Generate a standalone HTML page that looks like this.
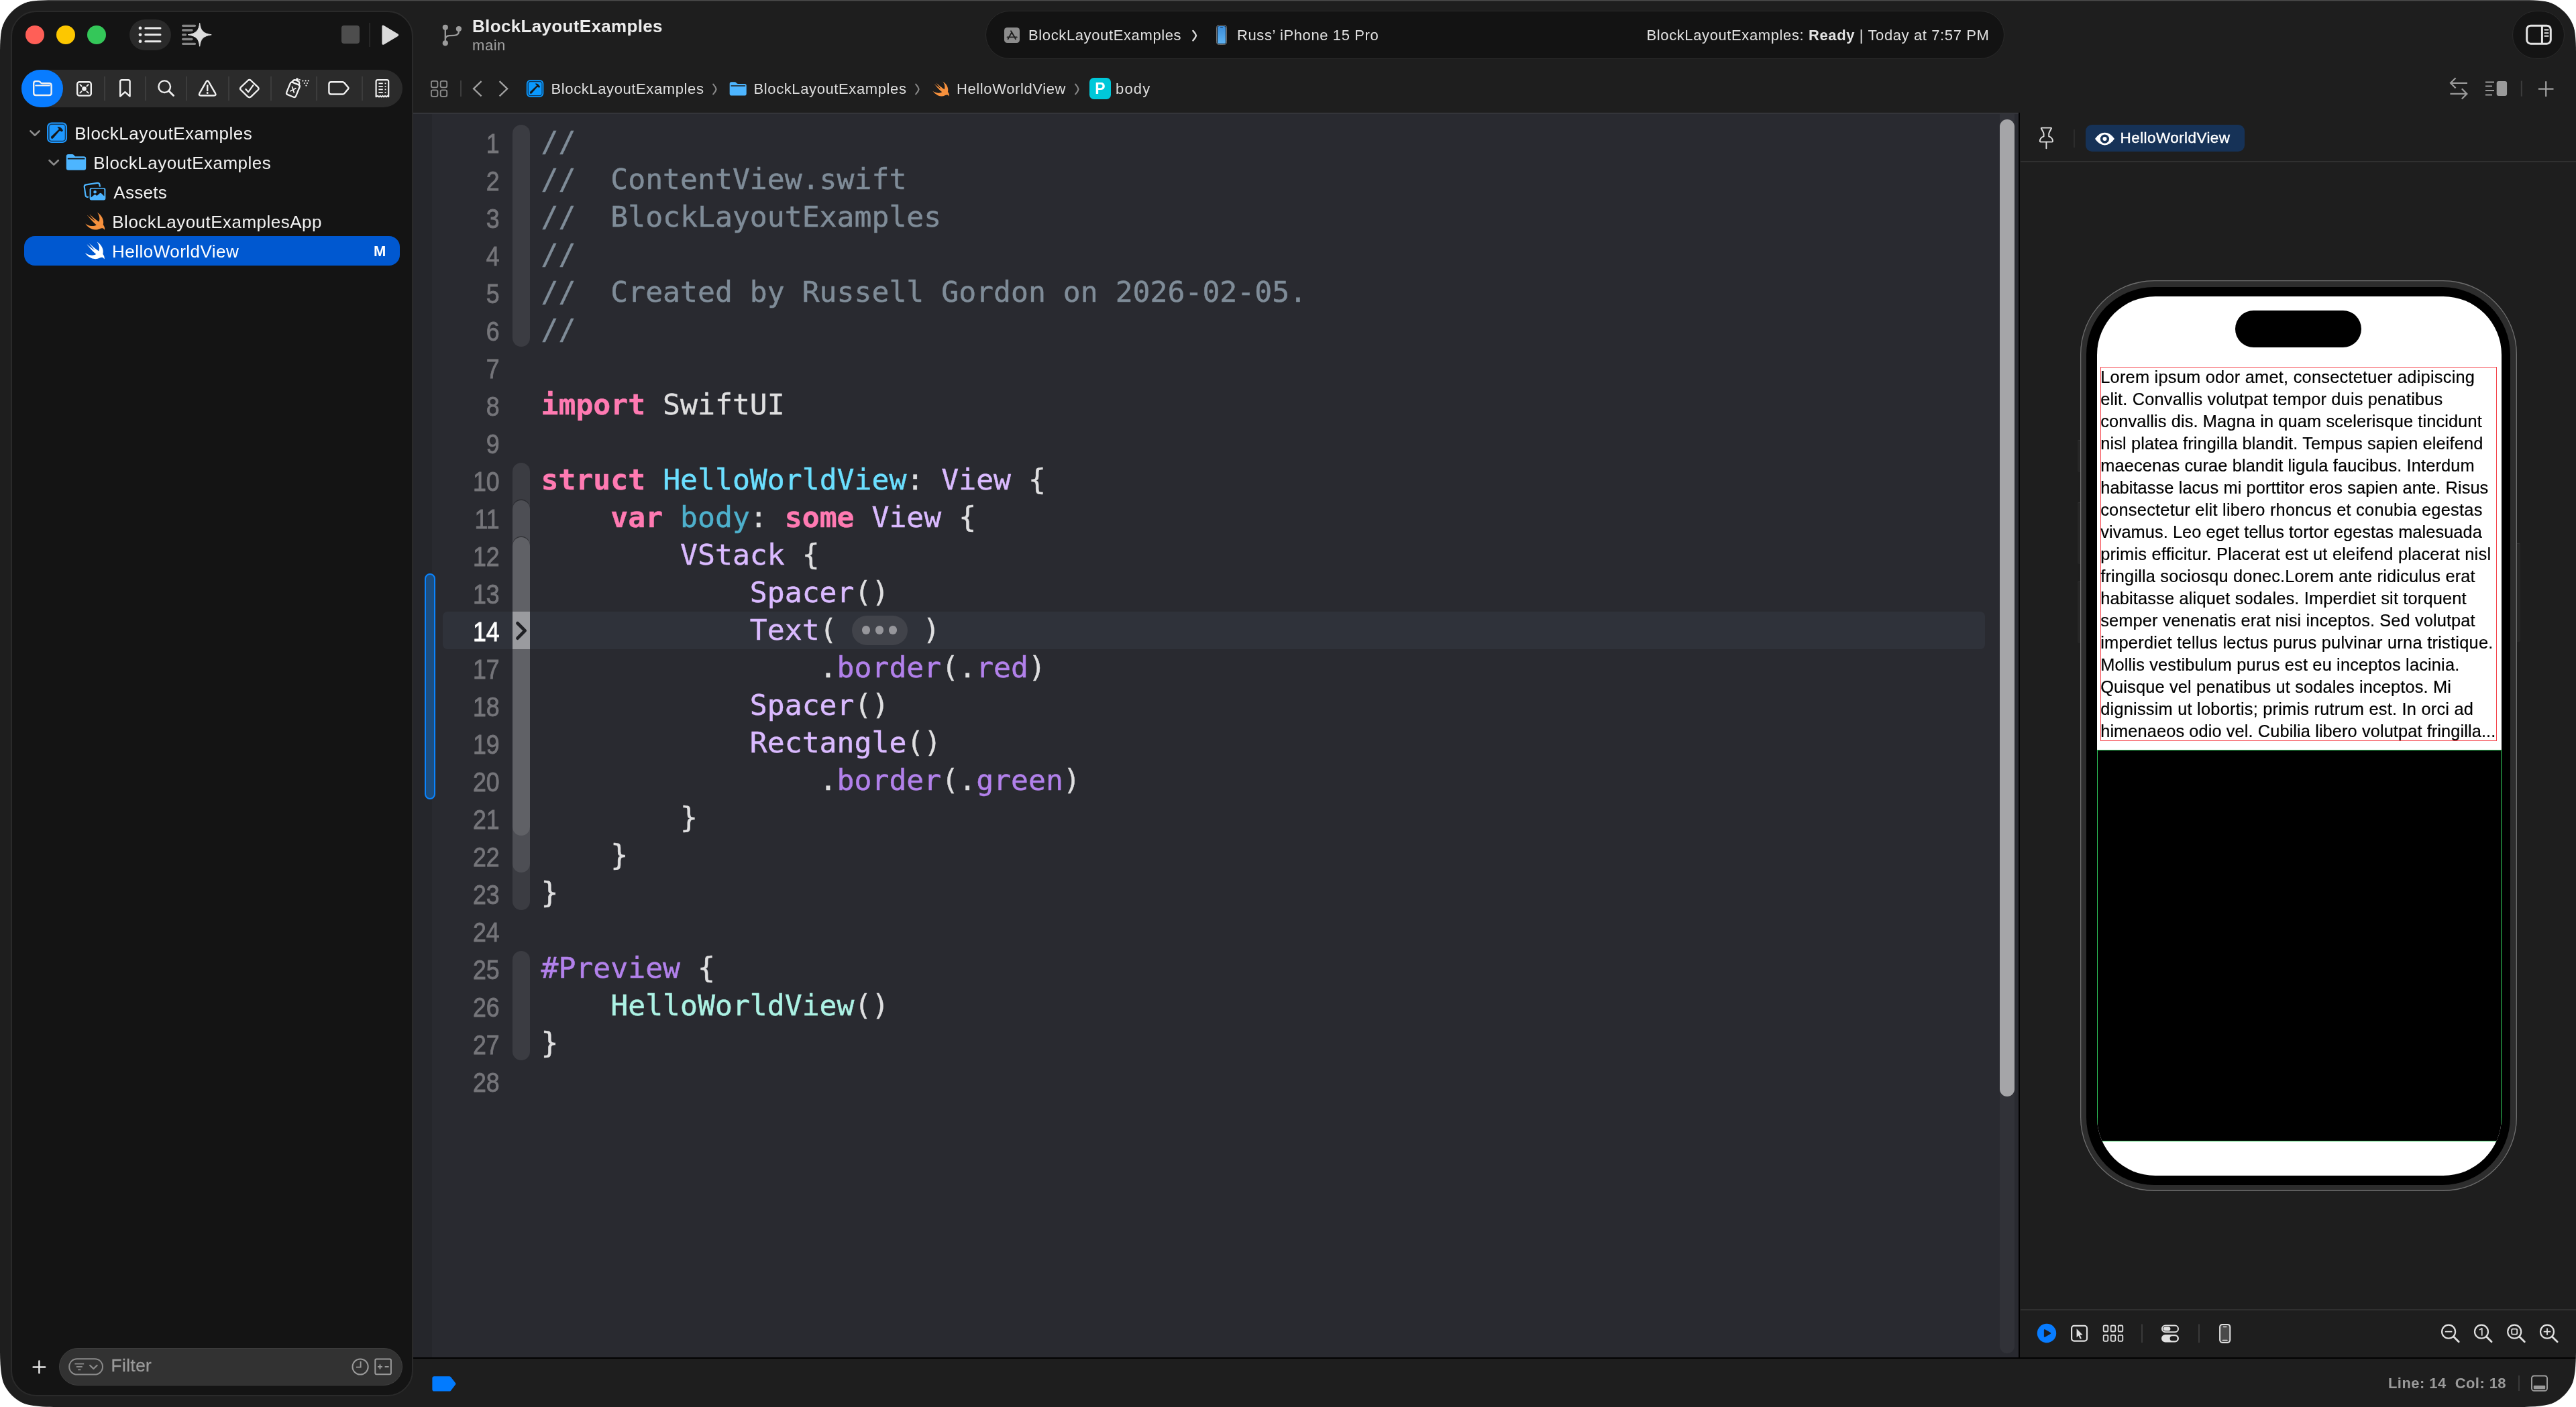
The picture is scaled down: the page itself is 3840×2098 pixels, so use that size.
<!DOCTYPE html>
<html lang="en">
<head>
<meta charset="utf-8">
<title>BlockLayoutExamples — HelloWorldView.swift</title>
<style>
*{box-sizing:border-box;margin:0;padding:0}
html,body{width:3840px;height:2098px;overflow:hidden;background:#fff}
body{font-family:"Liberation Sans",sans-serif;color:#e6e6e6;position:relative}
.abs,#win *{position:absolute}
#win{position:absolute;will-change:transform;left:0;top:0;width:3840px;height:2098px;background:#1e1e1e;border-radius:60px;overflow:hidden;clip-path:path('M0,78 C0,15 15,0 78,0 L3762,0 C3825,0 3840,15 3840,78 L3840,2012 C3840,2084 3826,2098 3754,2098 L86,2098 C14,2098 0,2084 0,2012 Z')}
#win span{white-space:pre}
#topline{left:0;top:0;width:3840px;height:2px;background:linear-gradient(#4d4d4d 0 50%,#2e2e2e 50% 100%)}
/* sidebar */
#side{left:16px;top:16px;width:600px;height:2066px;background:#141414;border:2px solid #2a2a2a;border-radius:38px}
.tl{width:28px;height:28px;border-radius:50%;top:38px}
.t{line-height:44px;height:44px;font-size:26px;letter-spacing:.48px;color:#f2f2f2}
.nsep{top:114px;width:2px;height:36px;background:#3c3c3c}
.jb{line-height:40px;height:40px;font-size:22px;letter-spacing:.61px;color:#dedede;top:112.5px}
.jchev{top:121.5px}
.sb{top:33px;line-height:40px;height:40px;font-size:22px;letter-spacing:.62px;color:#e2e2e2}
.sb b{position:static!important}
/* editor */
#editor{left:616px;top:168px;width:2393px;height:1856px;background:#292a30;overflow:hidden}
#gut{left:0;top:0;width:28px;height:1856px;background:#25262b}
.ln{left:0;width:128.6px;text-align:right;font-size:41px;line-height:56px;height:56px;color:#75757a;transform:scaleX(.87);transform-origin:100% 50%;-webkit-text-stroke:.85px #75757a;margin-top:2px}
.cl{left:190.5px;font-family:"DejaVu Sans Mono","Liberation Mono",monospace;font-size:43.1px;line-height:56px;height:56px;color:#dfdfe0;-webkit-text-stroke:.45px;margin-top:.6px}
#win .cl span{position:static}
.c{color:#7f8c98}.k{color:#ff7ab2;font-weight:bold}.d{color:#6bdfff}.b{color:#4eb0cc}.v{color:#dabaff}.m{color:#b281eb}.p{color:#acf2e4}
#edtop{left:0;top:0;width:2394px;height:2px;background:#34353a}
#curline{left:44px;width:2299px;height:56px;background:#2f323a;border-radius:7px}
.rib{left:148px;width:26px;border-radius:13px}
.r1{background:#3b3c42}.r2{background:#4d4e54;box-shadow:0 -1.5px 0 #2a2b30}.r3{background:#606166;box-shadow:0 -1.5px 0 #333438}
#ribcur{left:148px;width:26px;height:56px;background:#9a9b9f}
#chg{left:17px;top:687px;width:16px;height:337px;border:2.5px solid #0a84ff;background:#1c4e80;border-radius:8px}
#fold{left:653.6px;width:83.4px;height:44px;border-radius:22px;background:#41434a}
#fold i{top:15.8px;width:12.4px;height:12.4px;border-radius:50%;background:#96969b}
#fold i:nth-child(1){left:15.2px}#fold i:nth-child(2){left:35.2px}#fold i:nth-child(3){left:55.2px}
#sbtrack{left:2365px;top:2px;width:22.3px;height:1848px;background:#313238;border-radius:0 0 11px 11px}
#sbthumb{left:2365px;top:10px;width:22.3px;height:1457.2px;background:#a5a5a8;border-radius:11.2px}
/* canvas */
#canvas{left:3010px;top:168px;width:830px;height:1856px;background:#1e1e1e}
.pbtn{background:#262626;border-radius:2px;border-top:1.5px solid #333}
#phone{left:3101px;top:418px;width:650.5px;height:1358px;border-radius:110px;background:#2d2d2d;box-shadow:inset 0 0 0 1.3px #6e6e6e}
#bezel{left:3110.2px;top:427.5px;width:631.8px;height:1339px;border-radius:101px;background:#000}
#screen{left:3125.5px;top:441.5px;width:603px;height:1311.5px;border-radius:87px;background:#fff;overflow:hidden}
.lo{left:3131.2px;height:33px;line-height:33px;font-size:25.4px;color:#000;-webkit-text-stroke:.2px #000}
</style>
</head>
<body>
<div id="win">
<div id="topline"></div>

<!-- ================= SIDEBAR ================= -->
<div id="side"></div>
<div class="tl" style="left:38px;background:#ff5f57"></div>
<div class="tl" style="left:84px;background:#fdc700"></div>
<div class="tl" style="left:130px;background:#34c759"></div>
<!-- toolbar buttons in sidebar -->
<div style="left:193px;top:29px;width:62px;height:46px;border-radius:23px;background:#2a2a2a"></div>
<svg style="left:193px;top:29px" width="62" height="46" viewBox="0 0 62 46"><g fill="#ebebeb"><circle cx="16" cy="12.9" r="2.4"/><circle cx="16" cy="22.8" r="2.4"/><circle cx="16" cy="32.7" r="2.4"/></g><g stroke="#ebebeb" stroke-width="3" stroke-linecap="round"><path d="M23.8 12.9H46M23.8 22.8H46M23.8 32.7H46"/></g></svg>
<svg style="left:268px;top:30px" width="52" height="44" viewBox="0 0 52 44"><g stroke="#858585" stroke-width="3.3" stroke-linecap="round"><path d="M4.6 8.3H22.5M4.6 15H18M4.6 21.8H8.6M4.6 28.5H18M4.6 35.3H22.5"/></g><path d="M29.7 4.4C31 15.5 34.5 19.8 47.2 21.8C34.5 23.8 31 28.1 29.7 39.2C28.4 28.1 24.9 23.8 12.2 21.8C24.9 19.8 28.4 15.5 29.7 4.4Z" fill="#dddddd" stroke="#dddddd" stroke-width="1" stroke-linejoin="round"/></svg>
<div style="left:509px;top:38px;width:27px;height:27px;border-radius:4px;background:#4d4d4d"></div>
<div style="left:550px;top:34px;width:2px;height:36px;background:#262626"></div>
<svg style="left:566px;top:34px" width="32" height="36" viewBox="0 0 32 36"><path d="M4.2 5.6V30.8Q4.2 32.6 5.8 31.7L26.7 19.3Q28 18.2 26.7 17.1L5.8 4.7Q4.2 3.8 4.2 5.6Z" fill="#dadada" stroke="#dadada" stroke-width="1.6" stroke-linejoin="round"/></svg>

<!-- navigator tab bar -->
<div style="left:32px;top:104px;width:568px;height:56px;border-radius:28px;background:#2b2b2b"></div>
<div style="left:32px;top:104px;width:62px;height:56px;border-radius:28px;background:#087cff"></div>
<div class="nsep" style="left:155px"></div><div class="nsep" style="left:216px"></div><div class="nsep" style="left:277px"></div><div class="nsep" style="left:340px"></div><div class="nsep" style="left:403px"></div><div class="nsep" style="left:471px"></div><div class="nsep" style="left:539px"></div>
<svg style="left:32px;top:104px" width="568" height="56" viewBox="32 104 568 56" fill="none" stroke="#f0f0f0" stroke-width="2.4" stroke-linecap="round" stroke-linejoin="round">
<!-- folder -->
<path d="M50.2 124.2Q50.2 121.1 53.3 121.1H57.2Q58.8 121.1 59.8 122.3L60.6 123.3Q61.5 124.3 63.2 124.3H73.4Q76.6 124.3 76.6 127.5V138.8Q76.6 142 73.4 142H53.4Q50.2 142 50.2 138.8Z"/><path d="M53.2 127.4H73.8" stroke-width="2"/>
<!-- source control box -->
<rect x="115.2" y="122.2" width="20.6" height="20.4" rx="3.2"/><circle cx="125.5" cy="132.4" r="3.3" fill="#f0f0f0" stroke="none"/><path d="M119.3 126.2L121.6 128.5M131.7 126.2L129.4 128.5M119.3 138.6L121.6 136.3M131.7 138.6L129.4 136.3" stroke-width="1.9"/>
<!-- bookmark -->
<path d="M179.2 121.6Q179.2 119.2 181.6 119.2H191.2Q193.6 119.2 193.6 121.6V143.6L186.4 137.2L179.2 143.6Z"/>
<!-- search -->
<circle cx="245.2" cy="129.2" r="8.8"/><path d="M251.8 135.8L258.6 142.6" stroke-width="2.8"/>
<!-- warning -->
<path d="M307.2 122.1Q309.2 119 311.2 122.1L321 139.2Q322.6 142.5 319 142.5H299.4Q295.8 142.5 297.4 139.2Z"/><path d="M309.2 127.6V135" stroke-width="2.5"/><circle cx="309.2" cy="138.6" r="1.5" fill="#f0f0f0" stroke="none"/>
<!-- test diamond -->
<path d="M369.6 120L358.9 130.2Q357.2 132.1 358.9 134L369.6 144.3Q371.8 146 374 144.3L384.7 134Q386.4 132.1 384.7 130.2L374 120Q371.8 118.2 369.6 120Z"/><path d="M366.4 133L370.2 137.2L377.4 127.2" stroke-width="2.3"/>
<!-- spray can (debug) -->
<g transform="translate(438.6 131.2) rotate(22) scale(.86) translate(-441 -133)" stroke-width="2.7"><rect x="431.6" y="125" width="17.4" height="23" rx="3.2"/><path d="M434 125Q434 120 438 119.4H442.6Q446.6 120 446.6 125" /><rect x="438.4" y="115.6" width="3.8" height="3.8" rx="1" fill="#f0f0f0" stroke-width="1"/><path d="M437 132.6L443.6 140.4M443.6 132.6L437 140.4" stroke-width="2"/></g>
<g fill="#f0f0f0" stroke="none"><circle cx="446.8" cy="119" r="1.1"/><circle cx="451.4" cy="120.6" r="1.1"/><circle cx="455.6" cy="120.4" r="1.1"/><circle cx="459.8" cy="120.4" r="1.1"/><circle cx="453.8" cy="124" r="1.1"/><circle cx="458" cy="124" r="1.1"/><circle cx="456.4" cy="127.6" r="1.1"/></g>
<!-- breakpoint tag -->
<path d="M490.4 125.4Q490.4 122.2 493.6 122.2H510.6Q512.2 122.2 513.4 123.6L519 130.2Q519.9 131.4 519 132.6L513.4 139.2Q512.2 140.5 510.6 140.5H493.6Q490.4 140.5 490.4 137.3Z"/>
<!-- report -->
<path d="M560.6 144.2V121.6Q560.6 119.2 563 119.2H576.8Q579.2 119.2 579.2 121.6V144.2L577.6 143L575.8 144.4L574 143L572.2 144.4L570.4 143L568.6 144.4L566.8 143L565 144.4L563.2 143Z" stroke-width="2.2"/><path d="M564.4 124.4H570.8M573.6 124.4H575.4M564.4 128.9H570.8M573.6 128.9H575.4M564.4 133.4H570.8M573.6 133.4H575.4M564.4 137.9H570.8M573.6 137.9H575.4" stroke-width="1.7" stroke-linecap="butt"/>
</svg>

<!-- tree disclosure chevrons + icons -->
<svg style="left:40px;top:176px" width="130" height="176" viewBox="40 176 130 176" fill="none">
<path d="M45.4 195.4L52 201.8L58.6 195.4M73.6 239.2L80.2 245.6L86.8 239.2" stroke="#8c8c8c" stroke-width="2.7" stroke-linecap="round" stroke-linejoin="round"/>
<!-- project icon -->
<rect x="71" y="183.45" width="28.1" height="28.7" rx="6" fill="#133a5e" stroke="#1e98ff" stroke-width="1.9"/><rect x="73.65" y="186.1" width="23.05" height="23.6" rx="3.3" fill="#1e98ff"/>
<path d="M76.4 203.4L88.4 192L90 193.8L79.2 206.2Q77.6 207.4 76.4 206.2Q75.4 204.8 76.4 203.4Z" fill="#17181a"/><path d="M85.2 189.1Q88.6 188.5 91 190.6L94 194.2L92.2 196.8L90.4 195.2L89.4 195.6L87.6 192Q86.8 190.4 85.2 189.1Z" fill="#17181a"/>
<!-- folder filled -->
<path d="M98.8 233.2Q98.8 229.9 102.1 229.9H107.4Q109.2 229.9 110.2 231.2L111.2 232.4Q112 233.3 113.6 233.3H124.9Q128.2 233.3 128.2 236.6V250.4Q128.2 253.7 124.9 253.7H102.1Q98.8 253.7 98.8 250.4Z" fill="#4db5ff"/><path d="M101.6 236.7H125.6" stroke="#141414" stroke-width="1.7" stroke-linecap="round"/>
<!-- assets -->
<g transform="rotate(-8 137 284)"><rect x="126.6" y="274.2" width="23" height="18.6" rx="3" stroke="#4db5ff" stroke-width="2.2"/></g>
<rect x="132.8" y="279.4" width="25.4" height="19.8" rx="3.2" fill="#4db5ff" stroke="#141414" stroke-width="1.6"/>
<path d="M135.6 283.2Q135.6 281.8 137 281.8H154Q155.4 281.8 155.4 283.2V292.6L151 288.2Q149.8 287.2 148.6 288.2L144.4 292L142.6 290.4Q141.6 289.6 140.6 290.4L135.6 294.6Z" fill="#141414"/><circle cx="141.6" cy="286.2" r="2.3" fill="#4db5ff"/>
<!-- swift (orange) -->
<g transform="translate(123.4 311.4) scale(1.595)"><path fill="#f7913d" d="M13.543 3.41c4.114 2.47 6.545 7.162 5.549 11.131-.024.093-.05.181-.076.272l.002.001c2.062 2.538 1.5 5.258 1.236 4.745-1.072-2.086-3.066-1.568-4.088-1.043a6.803 6.803 0 0 1-.281.158l-.02.012-.002.002c-2.115 1.123-4.957 1.205-7.812-.022a12.568 12.568 0 0 1-5.64-4.838c.649.48 1.35.902 2.097 1.252 3.019 1.414 6.051 1.311 8.197-.002C9.651 12.73 7.101 9.67 5.146 7.191a10.628 10.628 0 0 1-1.005-1.384c2.34 2.142 6.038 4.83 7.365 5.576C8.69 8.408 6.208 4.743 6.324 4.86c4.436 4.47 8.528 6.996 8.528 6.996.154.085.27.154.36.213.085-.215.16-.437.224-.668.708-2.588-.09-5.548-1.893-7.992z"/></g>
</svg>
<span class="t" style="left:111.3px;top:176.5px">BlockLayoutExamples</span>
<span class="t" style="left:139.3px;top:220.5px">BlockLayoutExamples</span>
<span class="t" style="left:169.3px;top:264.5px;letter-spacing:.3px">Assets</span>
<span class="t" style="left:167.3px;top:308.5px">BlockLayoutExamplesApp</span>
<div style="left:36px;top:352px;width:560px;height:44px;border-radius:16px;background:#0058d0"></div>
<svg style="left:123.4px;top:355.4px" width="40" height="36" viewBox="0 0 25.08 22.57"><path fill="#ffffff" d="M13.543 3.41c4.114 2.47 6.545 7.162 5.549 11.131-.024.093-.05.181-.076.272l.002.001c2.062 2.538 1.5 5.258 1.236 4.745-1.072-2.086-3.066-1.568-4.088-1.043a6.803 6.803 0 0 1-.281.158l-.02.012-.002.002c-2.115 1.123-4.957 1.205-7.812-.022a12.568 12.568 0 0 1-5.64-4.838c.649.48 1.35.902 2.097 1.252 3.019 1.414 6.051 1.311 8.197-.002C9.651 12.73 7.101 9.67 5.146 7.191a10.628 10.628 0 0 1-1.005-1.384c2.34 2.142 6.038 4.83 7.365 5.576C8.69 8.408 6.208 4.743 6.324 4.86c4.436 4.47 8.528 6.996 8.528 6.996.154.085.27.154.36.213.085-.215.16-.437.224-.668.708-2.588-.09-5.548-1.893-7.992z"/></svg>
<span class="t" style="left:167px;top:352.5px;color:#fff;letter-spacing:.48px">HelloWorldView</span>
<span class="t" style="left:557px;top:352.5px;color:#fff;font-weight:bold;font-size:22px;letter-spacing:0">M</span>
<svg style="left:44px;top:2024px" width="30" height="30" viewBox="44 2024 30 30"><path d="M49.6 2038.4H67.2M58.4 2029.6V2047.2" stroke="#e4e4e4" stroke-width="2.5" stroke-linecap="round"/></svg>
<div style="left:88px;top:2010px;width:512px;height:56px;border-radius:28px;background:#323232;border:1.5px solid #3f3f3f"></div>
<svg style="left:100px;top:2022px" width="60" height="32" viewBox="100 2022 60 32" fill="none" stroke="#8a8a8a" stroke-width="2" stroke-linecap="round"><rect x="103.2" y="2026.2" width="49.8" height="23.4" rx="11.7"/><path d="M111.4 2033.6H125.2M113.8 2038H122.8M116.2 2042.4H120.4" stroke-width="1.9" stroke-linecap="butt"/><path d="M134.2 2036L139.4 2041L144.6 2036" stroke-width="2.4" stroke-linejoin="round"/></svg>
<span style="left:165.5px;top:2013.6px;line-height:44px;font-size:26px;letter-spacing:.5px;color:#9a9a9a;-webkit-text-stroke:.3px #9a9a9a">Filter</span>
<svg style="left:520px;top:2020px" width="70" height="36" viewBox="520 2020 70 36" fill="none" stroke="#9a9a9a" stroke-width="2"><circle cx="537.1" cy="2038" r="11.6"/><path d="M537.6 2030V2038.6H531" stroke-width="1.9"/><rect x="559.3" y="2026.6" width="23.6" height="22.6" rx="2"/><path d="M563 2038H570M566.5 2034.5V2041.5M573.6 2038H579.6" stroke-width="1.9"/></svg>

<!-- ================= TOOLBAR ================= -->
<span style="left:704px;top:19px;line-height:40px;font-size:26px;font-weight:bold;letter-spacing:.34px;color:#ececec">BlockLayoutExamples</span>
<span style="left:704px;top:50px;line-height:36px;font-size:22px;letter-spacing:.55px;color:#a2a2a2">main</span>
<svg style="left:654px;top:32px" width="40" height="42" viewBox="654 32 40 42" fill="none"><path d="M663.8 41V64M683.9 43.5V46.5Q683.9 52.4 677 52.8L670 53.2Q663.8 53.6 663.8 59" stroke="#9b9b9b" stroke-width="2.3"/><g fill="#9b9b9b"><circle cx="663.8" cy="40.8" r="4.1"/><circle cx="683.9" cy="43.1" r="4.1"/><circle cx="663.8" cy="64.3" r="4.1"/></g></svg>
<!-- scheme / activity pill -->
<div style="left:1469px;top:16px;width:1519px;height:72px;border-radius:36px;background:#131313;border:1.5px solid #2a2a2a"></div>
<div style="left:1497px;top:40.6px;width:23.2px;height:23.2px;border-radius:4.5px;background:#8c8c8c"></div>
<svg style="left:1497px;top:40.6px" width="23.2" height="23.2" viewBox="0 0 23.2 23.2" fill="none" stroke="#1f1f1f" stroke-width="1.9" stroke-linecap="round"><path d="M11.2 7.2L6.6 15.4M10 5.2L11.6 7.8L17 17.2M4.6 14.4H13.4M16.4 14.4H18.8M5.6 17.2L6.2 16.2"/></svg>
<span class="sb" style="left:1533px">BlockLayoutExamples</span>
<svg style="left:1772px;top:40px" width="18" height="26" viewBox="0 0 18 26" fill="none"><path d="M6.4 5.9Q10.2 10 11 13.15Q10.2 16.3 6.4 20.4" stroke="#dcdcdc" stroke-width="2.4" stroke-linecap="round" stroke-linejoin="round"/></svg>
<div style="left:1813px;top:36.5px;width:16px;height:30.4px;border-radius:4.6px;background:linear-gradient(#3a8ad6,#5fb4f3);border:1.4px solid #777;box-shadow:inset 0 0 0 1px #1a1a1a"></div>
<div style="left:1818.6px;top:39.8px;width:4.8px;height:1.6px;border-radius:1px;background:#14304d"></div>
<span class="sb" style="left:1844px;letter-spacing:.61px">Russ’ iPhone 15 Pro</span>
<span class="sb" style="left:2454.5px;letter-spacing:.61px">BlockLayoutExamples: <b>Ready</b> | Today at 7:57 PM</span>
<!-- inspector toggle -->
<div style="left:3745px;top:16px;width:78px;height:72px;border-radius:36px;background:#141414;border:1.5px solid #2b2b2b"></div>
<svg style="left:3760px;top:32px" width="50" height="40" viewBox="3760 32 50 40" fill="none" stroke="#e4e4e4"><rect x="3766.7" y="38.2" width="35.6" height="27" rx="5.8" stroke-width="3"/><path d="M3789.4 38.2V65.2" stroke-width="3"/><path d="M3793.4 44.6H3798.6M3793.4 49.2H3798.6M3793.4 53.8H3798.6" stroke-width="2" stroke-linecap="round"/></svg>

<!-- ================= JUMP BAR ================= -->
<span class="jb" style="left:821.5px">BlockLayoutExamples</span>
<span class="jb" style="left:1123.5px">BlockLayoutExamples</span>
<span class="jb" style="left:1426px">HelloWorldView</span>
<span class="jb" style="left:1663px;letter-spacing:1.2px">body</span>
<svg style="left:636px;top:112px" width="180" height="40" viewBox="636 112 180 40" fill="none">
<g stroke="#8e8e8e" stroke-width="1.8"><rect x="642.9" y="120.8" width="9.5" height="9.5" rx="2.3"/><rect x="656.7" y="120.8" width="9.5" height="9.5" rx="2.3"/><rect x="642.9" y="134.4" width="9.5" height="9.5" rx="2.3"/><rect x="656.7" y="134.4" width="9.5" height="9.5" rx="2.3"/></g>
<path d="M687 120V144" stroke="#3d3d3d" stroke-width="2"/>
<path d="M717.6 121.2L706 132.3L717.6 143.4M744.6 121.2L756.2 132.3L744.6 143.4" stroke="#a0a0a0" stroke-width="2.3"/>
<g transform="translate(784.9 119.1) scale(0.846) translate(-70.07 -182.5)"><rect x="71" y="183.45" width="28.1" height="28.7" rx="6" fill="#0f3a62" stroke="#0a99ff" stroke-width="2.1"/><rect x="73.65" y="186.1" width="23.05" height="23.6" rx="3.3" fill="#0a99ff"/><path d="M76.4 203.4L88.4 192L90 193.8L79.2 206.2Q77.6 207.4 76.4 206.2Q75.4 204.8 76.4 203.4Z" fill="#17181a"/><path d="M85.2 189.1Q88.6 188.5 91 190.6L94 194.2L92.2 196.8L90.4 195.2L89.4 195.6L87.6 192Q86.8 190.4 85.2 189.1Z" fill="#17181a"/></g>
</svg>
<svg class="jchev" style="left:1060px"  width="12" height="22" viewBox="0 0 12 22" fill="none"><path d="M3.2 3.6Q6.9 7.6 7.6 11Q6.9 14.4 3.2 18.4" stroke="#8a8a8a" stroke-width="2.1" stroke-linecap="round" stroke-linejoin="round"/></svg>
<svg class="jchev" style="left:1362px" width="12" height="22" viewBox="0 0 12 22" fill="none"><path d="M3.2 3.6Q6.9 7.6 7.6 11Q6.9 14.4 3.2 18.4" stroke="#8a8a8a" stroke-width="2.1" stroke-linecap="round" stroke-linejoin="round"/></svg>
<svg class="jchev" style="left:1600px" width="12" height="22" viewBox="0 0 12 22" fill="none"><path d="M3.2 3.6Q6.9 7.6 7.6 11Q6.9 14.4 3.2 18.4" stroke="#8a8a8a" stroke-width="2.1" stroke-linecap="round" stroke-linejoin="round"/></svg>
<!-- folder -->
<svg style="left:1086.8px;top:120.5px" width="26.4" height="22.6" viewBox="98 228.5 31 26.5"><path d="M98.8 233.2Q98.8 229.9 102.1 229.9H107.4Q109.2 229.9 110.2 231.2L111.2 232.4Q112 233.3 113.6 233.3H124.9Q128.2 233.3 128.2 236.6V250.4Q128.2 253.7 124.9 253.7H102.1Q98.8 253.7 98.8 250.4Z" fill="#4db5ff"/><path d="M101.6 236.7H125.6" stroke="#1e1e1e" stroke-width="1.7" stroke-linecap="round"/></svg>
<!-- swift -->
<svg style="left:1388.8px;top:119.8px" width="27.6" height="25.7" viewBox="1.5 2.4 20.2 18.8"><path fill="#f7913d" d="M13.543 3.41c4.114 2.47 6.545 7.162 5.549 11.131-.024.093-.05.181-.076.272l.002.001c2.062 2.538 1.5 5.258 1.236 4.745-1.072-2.086-3.066-1.568-4.088-1.043a6.803 6.803 0 0 1-.281.158l-.02.012-.002.002c-2.115 1.123-4.957 1.205-7.812-.022a12.568 12.568 0 0 1-5.64-4.838c.649.48 1.350.902 2.097 1.252 3.019 1.414 6.051 1.311 8.197-.002C9.651 12.73 7.101 9.67 5.146 7.191a10.628 10.628 0 0 1-1.005-1.384c2.34 2.142 6.038 4.83 7.365 5.576C8.69 8.408 6.208 4.743 6.324 4.86c4.436 4.47 8.528 6.996 8.528 6.996.154.085.27.154.36.213.085-.215.16-.437.224-.668.708-2.588-.09-5.548-1.893-7.992z"/></svg>
<!-- P property badge -->
<div style="left:1624px;top:116px;width:32px;height:32px;border-radius:6.5px;background:#00c8d9"></div>
<span style="left:1624px;top:116px;width:32px;line-height:32px;text-align:center;font-size:23px;font-weight:bold;color:#fff">P</span>
<!-- right side -->
<svg style="left:3640px;top:112px" width="180" height="40" viewBox="3640 112 180 40" fill="none" stroke="#9a9a9a" stroke-width="2.2">
<path d="M3678 123.8H3653M3660.6 116.2L3653 123.8L3660.6 131.4M3652.4 139.9H3677.4M3669.8 132.3L3677.4 139.9L3669.8 147.5"/>
<path d="M3705 122.5H3718M3705 128.6H3715M3705 135H3718M3705 141.4H3715" stroke-width="2"/>
<rect x="3721.7" y="121" width="15.4" height="22" rx="3" fill="#9a9a9a" stroke="none"/>
<path d="M3758.8 120.4V143.8" stroke="#3d3d3d" stroke-width="2"/>
<path d="M3783.9 132.6H3806.5M3795.2 121.3V143.9" stroke="#a0a0a0"/>
</svg>

<!-- ================= EDITOR ================= -->
<div id="editor">
<div id="gut"></div>
<div id="edtop"></div>
<div id="curline" style="top:743.6px"></div>
<div class="rib r1" style="top:18.0px;height:330.6px"></div>
<div class="rib r1" style="top:522.0px;height:666.6px"></div>
<div class="rib r2" style="top:577.7px;height:554.9px"></div>
<div class="rib r3" style="top:633.4px;height:444.6px"></div>
<div class="rib r1" style="top:1250.0px;height:162.6px"></div>
<div id="ribcur" style="top:743.6px"><svg width="26" height="56" viewBox="0 0 26 56"><path d="M7.5 17.2 L18.6 28.4 L7.5 39.6" fill="none" stroke="#1f2024" stroke-width="4.8" stroke-linecap="round" stroke-linejoin="round"/></svg></div>
<div id="chg"></div>
<span class="ln" style="top:15.6px">1</span>
<span class="cl" style="top:14.6px"><span class="c">//</span></span>
<span class="ln" style="top:71.6px">2</span>
<span class="cl" style="top:70.6px"><span class="c">//  ContentView.swift</span></span>
<span class="ln" style="top:127.6px">3</span>
<span class="cl" style="top:126.6px"><span class="c">//  BlockLayoutExamples</span></span>
<span class="ln" style="top:183.6px">4</span>
<span class="cl" style="top:182.6px"><span class="c">//</span></span>
<span class="ln" style="top:239.6px">5</span>
<span class="cl" style="top:238.6px"><span class="c">//  Created by Russell Gordon on 2026-02-05.</span></span>
<span class="ln" style="top:295.6px">6</span>
<span class="cl" style="top:294.6px"><span class="c">//</span></span>
<span class="ln" style="top:351.6px">7</span>
<span class="ln" style="top:407.6px">8</span>
<span class="cl" style="top:406.6px"><span class="k">import</span> SwiftUI</span>
<span class="ln" style="top:463.6px">9</span>
<span class="ln" style="top:519.6px">10</span>
<span class="cl" style="top:518.6px"><span class="k">struct</span> <span class="d">HelloWorldView</span>: <span class="v">View</span> {</span>
<span class="ln" style="top:575.6px">11</span>
<span class="cl" style="top:574.6px">    <span class="k">var</span> <span class="b">body</span>: <span class="k">some</span> <span class="v">View</span> {</span>
<span class="ln" style="top:631.6px">12</span>
<span class="cl" style="top:630.6px">        <span class="v">VStack</span> {</span>
<span class="ln" style="top:687.6px">13</span>
<span class="cl" style="top:686.6px">            <span class="v">Spacer</span>()</span>
<span class="ln" style="top:743.6px;color:#fff;-webkit-text-stroke-color:#fff">14</span>
<span class="cl" style="top:742.6px">            <span class="v">Text</span>(</span>
<span class="ln" style="top:799.6px">17</span>
<span class="cl" style="top:798.6px">                .<span class="m">border</span>(.<span class="m">red</span>)</span>
<span class="ln" style="top:855.6px">18</span>
<span class="cl" style="top:854.6px">            <span class="v">Spacer</span>()</span>
<span class="ln" style="top:911.6px">19</span>
<span class="cl" style="top:910.6px">            <span class="v">Rectangle</span>()</span>
<span class="ln" style="top:967.6px">20</span>
<span class="cl" style="top:966.6px">                .<span class="m">border</span>(.<span class="m">green</span>)</span>
<span class="ln" style="top:1023.6px">21</span>
<span class="cl" style="top:1022.6px">        }</span>
<span class="ln" style="top:1079.6px">22</span>
<span class="cl" style="top:1078.6px">    }</span>
<span class="ln" style="top:1135.6px">23</span>
<span class="cl" style="top:1134.6px">}</span>
<span class="ln" style="top:1191.6px">24</span>
<span class="ln" style="top:1247.6px">25</span>
<span class="cl" style="top:1246.6px"><span class="m">#Preview</span> {</span>
<span class="ln" style="top:1303.6px">26</span>
<span class="cl" style="top:1302.6px">    <span class="p">HelloWorldView</span>()</span>
<span class="ln" style="top:1359.6px">27</span>
<span class="cl" style="top:1358.6px">}</span>
<span class="ln" style="top:1415.6px">28</span>
<div id="fold" style="top:749.6px"><i></i><i></i><i></i></div>
<span class="cl" style="top:742.6px;left:759.4px">)</span>
<div id="sbtrack"></div><div id="sbthumb"></div>
</div>

<!-- ================= CANVAS ================= -->
<div id="canvas"></div>
<div style="left:3008.8px;top:168px;width:2.4px;height:1856px;background:#020202"></div>
<div style="left:3011.5px;top:240px;width:830px;height:2px;background:#303030"></div>
<div style="left:3011.5px;top:1952px;width:830px;height:2px;background:#303030"></div>
<!-- canvas header -->
<svg style="left:3034px;top:184px" width="34" height="44" viewBox="3034 184 34 44" fill="none" stroke="#e0e0e0" stroke-width="1.9" stroke-linejoin="round" stroke-linecap="round"><path d="M3043.6 190.6H3057.2Q3058.4 190.6 3057.8 191.8L3055 197Q3054.2 198.6 3054.2 200V203.4Q3060 205.4 3060 210.6Q3060 211.6 3059 211.6H3041.8Q3040.8 211.6 3040.8 210.6Q3040.8 205.4 3046.6 203.4V200Q3046.6 198.6 3045.8 197L3043 191.8Q3042.4 190.6 3043.6 190.6Z"/><path d="M3050.4 211.6V221.2"/></svg>
<div style="left:3091px;top:192.5px;width:2px;height:27px;background:#2c2c2c"></div>
<div style="left:3109px;top:186px;width:237px;height:40px;border-radius:9.5px;background:#163257"></div>
<svg style="left:3120px;top:194px" width="36" height="26" viewBox="3120 194 36 26"><path d="M3123 207.1Q3129.4 197.8 3137.5 197.8Q3145.6 197.8 3152 207.1Q3145.6 216.4 3137.5 216.4Q3129.4 216.4 3123 207.1Z" fill="#fff"/><circle cx="3137.5" cy="207.1" r="6.6" fill="#163257"/><circle cx="3137.5" cy="207.1" r="3" fill="#fff"/></svg>
<span style="left:3160.6px;top:186px;line-height:40px;font-size:22.5px;letter-spacing:.42px;color:#fff;-webkit-text-stroke:.35px #fff">HelloWorldView</span>

<!-- ===== iPhone preview ===== -->
<div class="pbtn" style="left:3096.5px;top:656px;width:6px;height:48px"></div>
<div class="pbtn" style="left:3096.5px;top:749px;width:6px;height:92px"></div>
<div class="pbtn" style="left:3096.5px;top:867px;width:6px;height:92px"></div>
<div class="pbtn" style="left:3750px;top:810px;width:7px;height:147px"></div>
<div id="phone"></div>
<div id="bezel"></div>
<div id="screen">
<div style="left:0;top:676px;width:603px;height:584.5px;background:#000;border:1.6px solid #2fc75a"></div>
</div>
<div style="left:3332px;top:462.5px;width:188px;height:55.5px;border-radius:28px;background:#000"></div>
<div style="left:3130.6px;top:547px;width:591.4px;height:558.2px;border:1.7px solid #f5454c"></div>
<span class="lo" style="top:545.6px;letter-spacing:0.227px">Lorem ipsum odor amet, consectetuer adipiscing</span>
<span class="lo" style="top:578.6px;letter-spacing:0.170px">elit. Convallis volutpat tempor duis penatibus</span>
<span class="lo" style="top:611.6px;letter-spacing:0.111px">convallis dis. Magna in quam scelerisque tincidunt</span>
<span class="lo" style="top:644.6px;letter-spacing:0.116px">nisl platea fringilla blandit. Tempus sapien eleifend</span>
<span class="lo" style="top:677.6px;letter-spacing:0.119px">maecenas curae blandit ligula faucibus. Interdum</span>
<span class="lo" style="top:710.6px;letter-spacing:0.073px">habitasse lacus mi porttitor eros sapien ante. Risus</span>
<span class="lo" style="top:743.6px;letter-spacing:0.238px">consectetur elit libero rhoncus et conubia egestas</span>
<span class="lo" style="top:776.6px;letter-spacing:0.055px">vivamus. Leo eget tellus tortor egestas malesuada</span>
<span class="lo" style="top:809.6px;letter-spacing:0.221px">primis efficitur. Placerat est ut eleifend placerat nisl</span>
<span class="lo" style="top:842.6px;letter-spacing:0.164px">fringilla sociosqu donec.Lorem ante ridiculus erat</span>
<span class="lo" style="top:875.6px;letter-spacing:0.160px">habitasse aliquet sodales. Imperdiet sit torquent</span>
<span class="lo" style="top:908.6px;letter-spacing:0.108px">semper venenatis erat nisi inceptos. Sed volutpat</span>
<span class="lo" style="top:941.6px;letter-spacing:0.258px">imperdiet tellus lectus purus pulvinar urna tristique.</span>
<span class="lo" style="top:974.6px;letter-spacing:0.154px">Mollis vestibulum purus est eu inceptos lacinia.</span>
<span class="lo" style="top:1007.6px;letter-spacing:0.140px">Quisque vel penatibus ut sodales inceptos. Mi</span>
<span class="lo" style="top:1040.6px;letter-spacing:0.217px">dignissim ut lobortis; primis rutrum est. In orci ad</span>
<span class="lo" style="top:1073.6px;letter-spacing:0.086px">himenaeos odio vel. Cubilia libero volutpat fringilla...</span>
<!-- canvas bottom bar -->
<svg style="left:3030px;top:1968px" width="310" height="40" viewBox="3030 1968 310 40" fill="none" stroke="#e0e0e0" stroke-width="2">
<circle cx="3051" cy="1988" r="14.2" fill="#087cff" stroke="none"/><path d="M3047.4 1983.2V1992.8Q3047.4 1993.8 3048.3 1993.3L3056.6 1988.5Q3057.4 1988 3056.6 1987.5L3048.3 1982.7Q3047.4 1982.2 3047.4 1983.2Z" fill="#1e1e1e" stroke="#1e1e1e" stroke-width="1" stroke-linejoin="round"/>
<rect x="3088.1" y="1976.9" width="22.9" height="22.7" rx="3.8" stroke-width="2.2"/><path d="M3095.6 1981.2V1994.2L3098.6 1991.5L3100.9 1996.6L3102.9 1995.7L3100.7 1990.8L3104.6 1990.5Z" fill="#e0e0e0" stroke="none"/>
<g stroke-width="1.8"><rect x="3135.7" y="1976.5" width="6.6" height="9" rx="1.8"/><rect x="3146.7" y="1976.5" width="6.6" height="9" rx="1.8"/><rect x="3157.7" y="1976.5" width="6.6" height="9" rx="1.8"/><rect x="3135.7" y="1990.8" width="6.6" height="9" rx="1.8"/><rect x="3146.7" y="1990.8" width="6.6" height="9" rx="1.8"/><rect x="3157.7" y="1990.8" width="6.6" height="9" rx="1.8"/></g>
<path d="M3193 1974.4V2002M3278 1974.4V2002" stroke="#3a3a3a"/>
<rect x="3223" y="1976.6" width="24" height="9.6" rx="4.8" stroke-width="2"/><rect x="3224.8" y="1978.4" width="10.6" height="6" rx="3" fill="#e0e0e0" stroke="none"/>
<rect x="3222" y="1990" width="26" height="11.4" rx="5.7" fill="#e0e0e0" stroke="none"/><rect x="3234.6" y="1992.2" width="11" height="7" rx="3.5" fill="#1e1e1e" stroke="none"/>
<rect x="3309.1" y="1974.9" width="15.2" height="27" rx="3.8" fill="#4a4a4a" stroke-width="2"/><path d="M3314.6 1978.6H3318.8M3313.4 1998.4H3320" stroke-width="1.5" stroke-linecap="round"/>
</svg>
<svg style="left:3630px;top:1968px" width="200" height="40" viewBox="3630 1968 200 40" fill="none" stroke="#e0e0e0" stroke-width="2.2" stroke-linecap="round">
<circle cx="3650.1" cy="1985.7" r="10"/><path d="M3657.4 1993L3665.2 2000.8" stroke-width="2.8"/><path d="M3645.6 1985.7H3654.6" stroke-width="1.8"/>
<circle cx="3699" cy="1985.7" r="10"/><path d="M3706.3 1993L3714.1 2000.8" stroke-width="2.8"/><path d="M3696.6 1982.6L3699.8 1980.6V1991" stroke-width="1.7" stroke-linejoin="round"/>
<circle cx="3748.2" cy="1985.7" r="10"/><path d="M3755.5 1993L3763.3 2000.8" stroke-width="2.8"/><rect x="3744.2" y="1981.7" width="8" height="8" rx="1.6" stroke-width="1.8"/>
<circle cx="3797" cy="1985.7" r="10"/><path d="M3804.3 1993L3812.1 2000.8" stroke-width="2.8"/><path d="M3792.5 1985.7H3801.5M3797 1981.2V1990.2" stroke-width="1.8"/>
</svg>

<!-- ================= STATUS BAR ================= -->
<div style="left:616px;top:2023.8px;width:3224px;height:2.3px;background:#020202"></div>
<svg style="left:640px;top:2046.7px" width="46" height="32" viewBox="640 2046 46 32"><path d="M644.4 2054Q644.4 2051.2 647.2 2051.2H669.6Q671.2 2051.2 672.2 2052.4L679 2061.2Q679.8 2062.4 679 2063.6L672.2 2072.4Q671.2 2073.6 669.6 2073.6H647.2Q644.4 2073.6 644.4 2070.8Z" fill="#027bff"/></svg>
<span style="left:3560px;top:2043px;line-height:40px;font-size:22px;font-weight:bold;letter-spacing:.43px;color:#9b9b9b">Line: 14  Col: 18</span>
<div style="left:3754px;top:2050.5px;width:2px;height:23px;background:#3a3a3a"></div>
<svg style="left:3768px;top:2046px" width="36" height="34" viewBox="3768 2046 36 34" fill="none"><rect x="3774" y="2051.4" width="23" height="22.4" rx="3.6" stroke="#9b9b9b" stroke-width="2"/><rect x="3776.8" y="2066" width="17.4" height="5.2" rx="1" fill="#9b9b9b"/></svg>
</div>
</body>
</html>
